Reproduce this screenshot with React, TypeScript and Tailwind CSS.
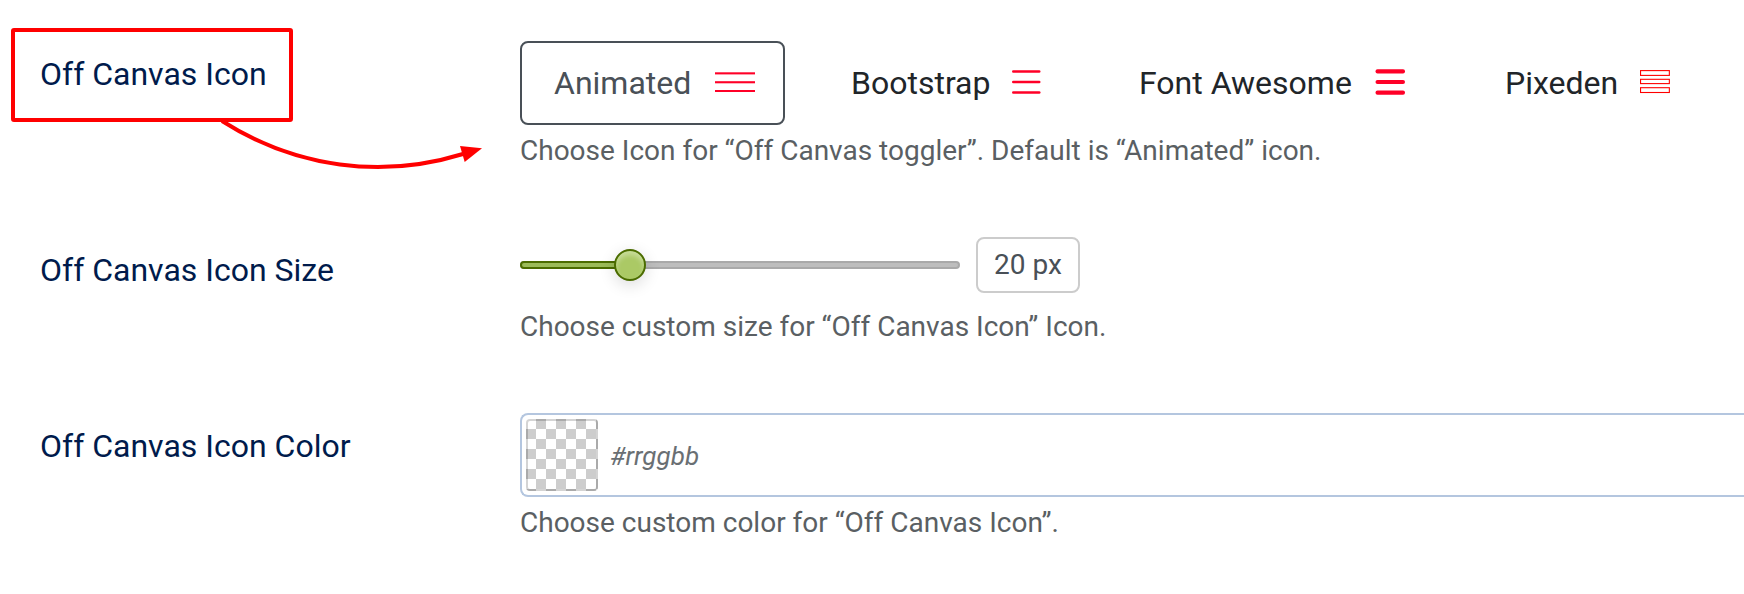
import React from "react";

// --- Icons ---
const AnimatedIcon = () => (
  <svg className="h-6 w-10" viewBox="0 0 40 24" fill="#ff0027">
    <rect y="1.3" width="40" height="2.1" />
    <rect y="10.2" width="40" height="2.1" />
    <rect y="19" width="40" height="2" />
  </svg>
);

const BootstrapIcon = () => (
  <svg className="h-[26px] w-[29px]" viewBox="0 0 29 26" fill="#ff0027">
    <rect y="0.2" width="28.5" height="2.6" rx="1.3" />
    <rect y="10.7" width="28.5" height="2.5" rx="1.25" />
    <rect y="21.2" width="28.5" height="2.5" rx="1.25" />
  </svg>
);

const FontAwesomeIcon = () => (
  <svg className="mb-0.5 h-[26px] w-[30px]" viewBox="0 0 30 26" fill="#ff0027">
    <rect y="0.2" x="0.5" width="29.5" height="4.2" rx="2" />
    <rect y="10.9" x="0.5" width="29.5" height="4.2" rx="2" />
    <rect y="21.5" x="0.5" width="29.5" height="4.2" rx="2" />
  </svg>
);

const PixedenIcon = () => (
  <svg className="mb-0.5 h-6 w-[30px]" viewBox="0 0 30 24" fill="none" stroke="#ff0000">
    <rect x="0.55" y="0.6" width="28.8" height="4.8" strokeWidth="1.1" />
    <rect x="0.55" y="9.3" width="28.8" height="4.3" strokeWidth="1.1" />
    <rect x="0.55" y="17.7" width="28.8" height="4.8" strokeWidth="1.1" />
  </svg>
);

const Field = ({ label, children }: any) => (
  <div className="flex items-start">
    <div className="w-[480px] shrink-0 pt-[9px] text-[32px] leading-[48px] text-[#001b4c]">{label}</div>
    <div className="min-w-0 flex-1">{children}</div>
  </div>
);

const Hint = ({ children }: any) => (
  <p className="mt-[5px] text-[28px] leading-[42px] text-[#5a5f63]">{children}</p>
);

// --- Red frame and arrow pointing at the icon options ---
const Callout = () => (
  <>
    <div className="pointer-events-none absolute left-[11px] top-7 h-[94px] w-[282px] rounded-[3px] border-4 border-[#ff0000]" />
    <svg className="pointer-events-none absolute left-0 top-0" width="500" height="190" fill="none">
      <path d="M222 121C296 168 382 179 463 154" stroke="#ff0000" strokeWidth="4" />
      <path d="M460 146L482 148.3L464.7 162Z" fill="#ff0000" />
    </svg>
  </>
);

export default function App() {
  return (
    <div className="relative h-[594px] w-full overflow-hidden bg-white pl-10 font-['Roboto',sans-serif]">
      <div className="pt-[41px]">
        <Field label="Off Canvas Icon">
          <div className="flex text-[32px] leading-[48px] text-[#212529]">
            <button className="flex h-[84px] w-[265px] shrink-0 items-center justify-between rounded-lg border-2 border-[#495057] pl-8 pr-7 text-[#495057]">
              Animated <AnimatedIcon />
            </button>
            <button className="ml-8 flex h-[84px] w-[256px] shrink-0 items-center justify-between pl-[34px] pr-8">
              Bootstrap <BootstrapIcon />
            </button>
            <button className="ml-8 flex h-[84px] w-[332px] shrink-0 items-center justify-between pl-[34px] pr-8">
              Font Awesome <FontAwesomeIcon />
            </button>
            <button className="ml-8 flex h-[84px] w-[233px] shrink-0 items-center justify-between pl-9 pr-8">
              Pixeden <PixedenIcon />
            </button>
          </div>
          <Hint>Choose Icon for “Off Canvas toggler”. Default is “Animated” icon.</Hint>
        </Field>
      </div>

      <div className="mt-[65px]">
        <Field label="Off Canvas Icon Size">
          <div className="flex h-14 items-center gap-4">
            <div className="relative flex h-2 w-[440px] rounded-full border-2 border-[#a9a9a9] bg-[#bdbdbd]">
              <div className="-my-0.5 -ml-0.5 h-2 w-[110px] rounded-l-full border-2 border-[#4b6c00] bg-[#9bbb59]" />
              <div className="absolute -top-3.5 left-[92px] h-8 w-8 rounded-full border-2 border-[#4b6c00] bg-[#abc965] shadow-[inset_0_4px_5px_rgba(255,255,255,0.35),0_4px_16px_rgba(0,0,0,0.14)]" />
            </div>
            <div className="flex h-14 w-[104px] items-center justify-center rounded-lg border-2 border-[#ccc] text-[28px] text-[#495057]">
              20 px
            </div>
          </div>
          <div className="pt-2">
            <Hint>Choose custom size for “Off Canvas Icon” Icon.</Hint>
          </div>
        </Field>
      </div>

      <div className="mt-[65px]">
        <Field label="Off Canvas Icon Color">
          <div className="flex h-[84px] items-center rounded-l-lg border-2 border-r-0 border-[#b4c6df] pl-1">
            <div className="h-[72px] w-[72px] rounded bg-[conic-gradient(#fff_25%,#cdcdcd_0_50%,#fff_0_75%,#cdcdcd_0)] bg-[length:20px_20px] bg-[position:10px_0] shadow-[inset_0_0_0_2px_rgba(0,0,0,0.17)]" />
            <span className="ml-3 pt-[3px] text-[26px] italic text-[#6a6f73]">#rrggbb</span>
          </div>
          <Hint>Choose custom color for “Off Canvas Icon”.</Hint>
        </Field>
      </div>

      <Callout />
    </div>
  );
}
